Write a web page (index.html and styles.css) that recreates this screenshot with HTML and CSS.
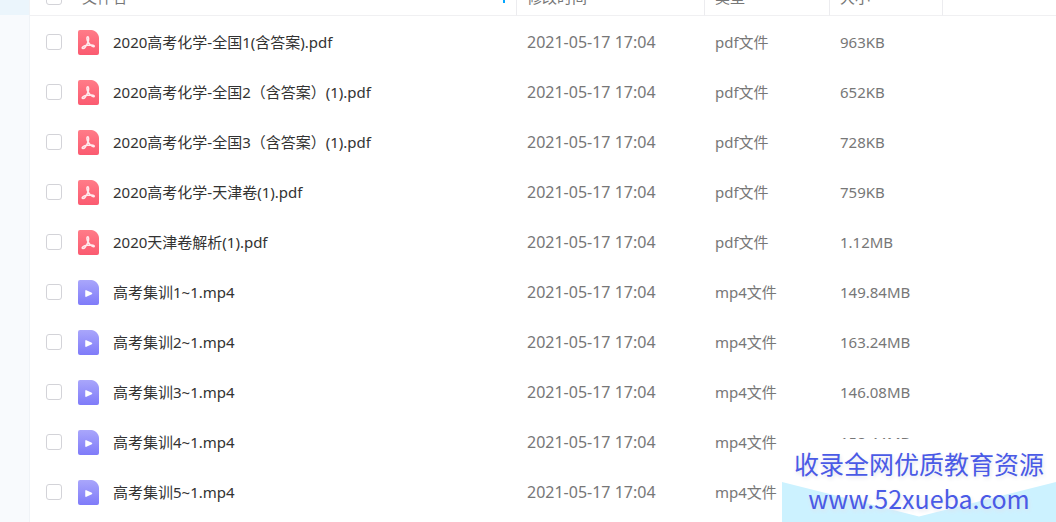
FILE: index.html
```html
<!DOCTYPE html>
<html lang="zh-CN">

<head>
	<meta charset="UTF-8">
	<meta name="viewport" content="width=device-width, initial-scale=1.0">
	<title>文件名</title>
	<link rel="stylesheet" href="styles.css">
</head>

<body>
	<svg class="sprite" aria-hidden="true">
		<defs>
			<linearGradient id="red" x1="0" y1="0" x2="0" y2="1">
				<stop offset="0" stop-color="#ff7c88" />
				<stop offset="1" stop-color="#fb5a70" />
			</linearGradient>
			<linearGradient id="violet" x1="0" y1="0" x2="0" y2="1">
				<stop offset="0" stop-color="#a9a6fb" />
				<stop offset="1" stop-color="#7f7bf9" />
			</linearGradient>
		</defs>
		<symbol id="pdf" viewBox="0 0 21 25">
			<path fill="url(#red)" d="M2 0h11.500C17 0 21 4 21 8V23q0 2-2 2H2q-2 0-2-2V2Q0 0 2 0z" />
			<path fill="none" stroke="#ffe9ec" stroke-width="1.500" stroke-linecap="round" stroke-linejoin="round" d="M10 12C8.600 9.500 8.600 6.800 9.700 6.800S11 9.500 10 12C8.800 15 6.500 18.800 4.800 18.600S5 15.800 8.500 15.300S16.500 14.600 16.300 16.200S12.500 15.800 10 12" />
		</symbol>
		<symbol id="mp4" viewBox="0 0 21 25">
			<path fill="url(#violet)" d="M2 0h11.500C17 0 21 4 21 8V23q0 2-2 2H2q-2 0-2-2V2Q0 0 2 0z" />
			<path fill="#fff" stroke="#fff" stroke-width="1.500" stroke-linejoin="round" d="M8 10.800v5.400l5.500-2.700z" />
		</symbol>
	</svg>

	<div class="layout">
		<aside class="sidebar">
			<div class="active"></div>
		</aside>
		<main>
			<table class="files">
				<thead>
					<tr>
						<th class="col-name">
							<div class="name">
								<input type="checkbox" aria-label="文件名">
								<span class="title">文件名</span>
								<svg class="sort" viewBox="0 0 8 12" aria-hidden="true"><path d="M4 12V1M1 4l3-3 3 3" /></svg>
							</div>
						</th>
						<th class="col-date">修改时间</th>
						<th class="col-type">类型</th>
						<th class="col-size">大小</th>
						<th class="col-rest"></th>
					</tr>
				</thead>
				<tbody>
					<tr>
						<td><label class="name"><input type="checkbox"><svg class="icon"><use href="#pdf" /></svg>2020高考化学-全国1(含答案).pdf</label></td>
						<td class="date">2021-05-17 17:04</td>
						<td>pdf文件</td>
						<td>963KB</td>
						<td></td>
					</tr>
					<tr>
						<td><label class="name"><input type="checkbox"><svg class="icon"><use href="#pdf" /></svg>2020高考化学-全国2（含答案）(1).pdf</label></td>
						<td class="date">2021-05-17 17:04</td>
						<td>pdf文件</td>
						<td>652KB</td>
						<td></td>
					</tr>
					<tr>
						<td><label class="name"><input type="checkbox"><svg class="icon"><use href="#pdf" /></svg>2020高考化学-全国3（含答案）(1).pdf</label></td>
						<td class="date">2021-05-17 17:04</td>
						<td>pdf文件</td>
						<td>728KB</td>
						<td></td>
					</tr>
					<tr>
						<td><label class="name"><input type="checkbox"><svg class="icon"><use href="#pdf" /></svg>2020高考化学-天津卷(1).pdf</label></td>
						<td class="date">2021-05-17 17:04</td>
						<td>pdf文件</td>
						<td>759KB</td>
						<td></td>
					</tr>
					<tr>
						<td><label class="name"><input type="checkbox"><svg class="icon"><use href="#pdf" /></svg>2020天津卷解析(1).pdf</label></td>
						<td class="date">2021-05-17 17:04</td>
						<td>pdf文件</td>
						<td>1.12MB</td>
						<td></td>
					</tr>
					<tr>
						<td><label class="name"><input type="checkbox"><svg class="icon"><use href="#mp4" /></svg>高考集训1~1.mp4</label></td>
						<td class="date">2021-05-17 17:04</td>
						<td>mp4文件</td>
						<td>149.84MB</td>
						<td></td>
					</tr>
					<tr>
						<td><label class="name"><input type="checkbox"><svg class="icon"><use href="#mp4" /></svg>高考集训2~1.mp4</label></td>
						<td class="date">2021-05-17 17:04</td>
						<td>mp4文件</td>
						<td>163.24MB</td>
						<td></td>
					</tr>
					<tr>
						<td><label class="name"><input type="checkbox"><svg class="icon"><use href="#mp4" /></svg>高考集训3~1.mp4</label></td>
						<td class="date">2021-05-17 17:04</td>
						<td>mp4文件</td>
						<td>146.08MB</td>
						<td></td>
					</tr>
					<tr>
						<td><label class="name"><input type="checkbox"><svg class="icon"><use href="#mp4" /></svg>高考集训4~1.mp4</label></td>
						<td class="date">2021-05-17 17:04</td>
						<td>mp4文件</td>
						<td>158.44MB</td>
						<td></td>
					</tr>
					<tr>
						<td><label class="name"><input type="checkbox"><svg class="icon"><use href="#mp4" /></svg>高考集训5~1.mp4</label></td>
						<td class="date">2021-05-17 17:04</td>
						<td>mp4文件</td>
						<td></td>
						<td></td>
					</tr>
				</tbody>
			</table>
		</main>
	</div>

	<div class="banner">
		<div>收录全网优质教育资源</div>
		<div>www.52xueba.com</div>
	</div>
</body>

</html>
```
FILE: styles.css
```css
* {
	margin: 0px;
	padding: 0px;
	box-sizing: border-box;
}

body {
	background-color: #fff;
	color: #444;
	font-family: "Noto Sans", "Noto Sans CJK SC", sans-serif;
	font-size: 15px;
	line-height: 20px;
	overflow: hidden;
}

.sprite {
	position: absolute;
	width: 0;
	height: 0;
}

.layout {
	display: flex;
	height: 100vh;
}

.sidebar {
	width: 30px;
	flex-shrink: 0;
	background-color: #f8fafd;
	border-right: 1px solid #f0f3f7;
}

.sidebar .active {
	height: 15px;
	background-color: #ebf5fc;
}

main {
	flex: 1;
	min-width: 0;
	overflow: hidden;
}

/* list is scrolled, the header is partly out of view */
.files {
	width: 100%;
	margin-top: -24px;
	table-layout: fixed;
	border-collapse: separate;
	border-spacing: 0;
}

th {
	height: 40px;
	padding-top: 2px;
	padding-left: 10px;
	border-right: 1px solid #ececef;
	border-bottom: 1px solid #f0f0f2;
	color: #777;
	font-weight: normal;
	text-align: left;
}

th.col-rest {
	border-right: none;
}

.col-date {
	width: 188px;
}

.col-type {
	width: 125px;
}

.col-size,
.col-rest {
	width: 113px;
}

td {
	height: 50px;
	padding-left: 10px;
	padding-top: 2px;
	color: #777;
	white-space: nowrap;
}

td:first-child,
th:first-child {
	padding-left: 16px;
}

td.date {
	font-size: 16px;
}

.name {
	display: flex;
	align-items: center;
	color: #333;
}

th .name {
	color: #777;
}

.name input {
	appearance: none;
	width: 16px;
	height: 16px;
	margin-right: 16px;
	border: 1px solid #d3d3d8;
	border-radius: 3px;
	background-color: #fff;
}

.name input:checked {
	background-color: #06a7ff;
}

.name .title {
	margin-left: 4px;
}

.icon {
	width: 21px;
	height: 25px;
	margin-right: 14px;
}

.sort {
	width: 8px;
	height: 14px;
	margin-left: auto;
	margin-right: 8px;
	fill: none;
	stroke: #06a7ff;
	stroke-width: 2;
}

.banner {
	position: fixed;
	right: 0;
	bottom: 0;
	width: 274px;
	padding: 7px 0 6px;
	background-color: #fff;
	color: #4a5ae6;
	font-family: "Noto Sans CJK SC", sans-serif;
	font-size: 25px;
	line-height: 35px;
	text-align: center;
	text-shadow: 1px 2px 4px #e0e2ec;
}

.banner::before {
	content: "";
	position: absolute;
	left: 0;
	right: 0;
	bottom: 0;
	z-index: -1;
	height: 40px;
	background-color: #ccf2ff;
	clip-path: polygon(0 0, 50% 86%, 100% 0, 100% 100%, 0 100%);
}
```
